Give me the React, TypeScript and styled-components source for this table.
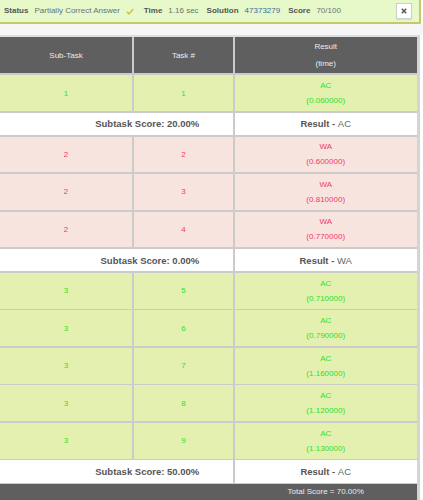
import * as React from 'react';
import styled, { createGlobalStyle } from 'styled-components';

type Verdict = 'AC' | 'WA';

interface TestRow {
    subtask: number;
    task: number;
    verdict: Verdict;
    time: string;
}

interface Group {
    score: string;
    verdict: Verdict;
    rows: TestRow[];
}

const groups: Group[] = [
    {
        score: '20.00%',
        verdict: 'AC',
        rows: [{ subtask: 1, task: 1, verdict: 'AC', time: '0.060000' }],
    },
    {
        score: '0.00%',
        verdict: 'WA',
        rows: [
            { subtask: 2, task: 2, verdict: 'WA', time: '0.600000' },
            { subtask: 2, task: 3, verdict: 'WA', time: '0.810000' },
            { subtask: 2, task: 4, verdict: 'WA', time: '0.770000' },
        ],
    },
    {
        score: '50.00%',
        verdict: 'AC',
        rows: [
            { subtask: 3, task: 5, verdict: 'AC', time: '0.710000' },
            { subtask: 3, task: 6, verdict: 'AC', time: '0.790000' },
            { subtask: 3, task: 7, verdict: 'AC', time: '1.160000' },
            { subtask: 3, task: 8, verdict: 'AC', time: '1.120000' },
            { subtask: 3, task: 9, verdict: 'AC', time: '1.130000' },
        ],
    },
];

const App: React.FC = () => {
    return (
        <>
            <GlobalStyle />
            <Banner>
                <Label>Status</Label>
                <Value>Partially Correct Answer</Value>
                <CheckIcon width="8" height="7" viewBox="0 0 8 7">
                    <path d="M0.8 3.8 L3 5.9 L7.2 0.9" fill="none" stroke="#c4c64c" strokeWidth="1.5" />
                </CheckIcon>
                <Label>Time</Label>
                <Value>1.16 sec</Value>
                <Label>Solution</Label>
                <Value link>47373279</Value>
                <Label>Score</Label>
                <Value>70/100</Value>
                <CloseButton>
                    <svg width="6" height="6" viewBox="0 0 6 6">
                        <path d="M0.8 0.8 L5.2 5.2 M5.2 0.8 L0.8 5.2" stroke="#555" strokeWidth="1.5" />
                    </svg>
                </CloseButton>
            </Banner>
            <Strip />
            <Panel>
                <Grid>
                    <HeadCell>Sub-Task</HeadCell>
                    <HeadCell>Task #</HeadCell>
                    <HeadCell>
                        Result
                        <br />
                        (time)
                    </HeadCell>
                    {groups.map((g, gi) => (
                        <React.Fragment key={gi}>
                            {g.rows.map((r) => (
                                <React.Fragment key={r.task}>
                                    <Cell verdict={r.verdict}>{r.subtask}</Cell>
                                    <Cell verdict={r.verdict}>{r.task}</Cell>
                                    <Cell verdict={r.verdict}>
                                        {r.verdict}
                                        <br />({r.time})
                                    </Cell>
                                </React.Fragment>
                            ))}
                            <ScoreCell>Subtask Score: {g.score}</ScoreCell>
                            <ResultCell>
                                <b>Result - </b>
                                {g.verdict}
                            </ResultCell>
                        </React.Fragment>
                    ))}
                    <Footer>
                        <span>Total Score = 70.00%</span>
                    </Footer>
                </Grid>
            </Panel>
        </>
    );
};

const GlobalStyle = createGlobalStyle`
    body {
        margin: 0;
        background: #fff;
        font-family: "Liberation Sans", Arial, sans-serif;
        overflow: hidden;
    }
`;

const Banner = styled.div`
    box-sizing: border-box;
    width: 421px;
    height: 24px;
    display: flex;
    align-items: center;
    padding: 0 0 1px 4px;
    background: #e7f9c8;
    border-right: 2px solid #c6c86c;
    border-bottom: 2px solid #c6c86c;
    font-size: 8px;
`;

const Label = styled.span`
    font-weight: bold;
    color: #555;
    margin-right: 6px;
`;

const Value = styled.span<{ link?: boolean }>`
    color: ${(p) => (p.link ? '#3a6a9e' : '#6a7178')};
    margin-right: 8px;
`;

const CheckIcon = styled.svg`
    margin: 2px 10px 0 -2px;
`;

const CloseButton = styled.div`
    box-sizing: border-box;
    margin-left: auto;
    margin-right: 7px;
    width: 16px;
    height: 16px;
    display: flex;
    align-items: center;
    justify-content: center;
    background: #fff;
    border: 1px solid #cfcfcf;
    box-shadow: 0 1px 1px rgba(0, 0, 0, 0.08);
`;

const Strip = styled.div`
    height: 10.7px;
    background: #f6f6f6;
`;

const Panel = styled.div`
    width: 420px;
    border-top: 2px solid #dedede;
    border-right: 3px solid #d4d4d4;
    box-sizing: border-box;
    background: #fff;
`;

const Grid = styled.div`
    display: grid;
    grid-template-columns: 132px 99.7px 181.7px;
    grid-template-rows: 36.8px;
    grid-auto-rows: auto;
    gap: 1.6px;
    background: #cbcbcb;
    width: 417px;
`;

const HeadCell = styled.div`
    background: #5f5f5f;
    color: #ececec;
    font-size: 8px;
    line-height: 17px;
    display: flex;
    align-items: center;
    justify-content: center;
    text-align: center;
`;

const Cell = styled.div<{ verdict: Verdict }>`
    height: 35.9px;
    display: flex;
    align-items: center;
    justify-content: center;
    text-align: center;
    font-size: 8px;
    line-height: 15px;
    background: ${(p) => (p.verdict === 'AC' ? '#e3f0b0' : '#f8e4df')};
    color: ${(p) => (p.verdict === 'AC' ? '#2fe02f' : '#f2386a')};
`;

const ScoreCell = styled.div`
    grid-column: 1 / 3;
    height: 22.4px;
    display: flex;
    align-items: center;
    justify-content: flex-end;
    padding-right: 34px;
    background: #fff;
    color: #555;
    font-size: 9.5px;
    font-weight: bold;
`;

const ResultCell = styled.div`
    height: 22.4px;
    display: flex;
    align-items: center;
    justify-content: center;
    background: #fff;
    color: #666;
    font-size: 9.5px;

    b {
        color: #555;
        white-space: pre;
    }
`;

const Footer = styled.div`
    grid-column: 1 / -1;
    height: 24px;
    display: flex;
    justify-content: flex-end;
    background: #5f5f5f;
    color: #ececec;
    font-size: 8px;

    span {
        width: 181.7px;
        padding-top: 3px;
        text-align: center;
    }
`;

export default App;
